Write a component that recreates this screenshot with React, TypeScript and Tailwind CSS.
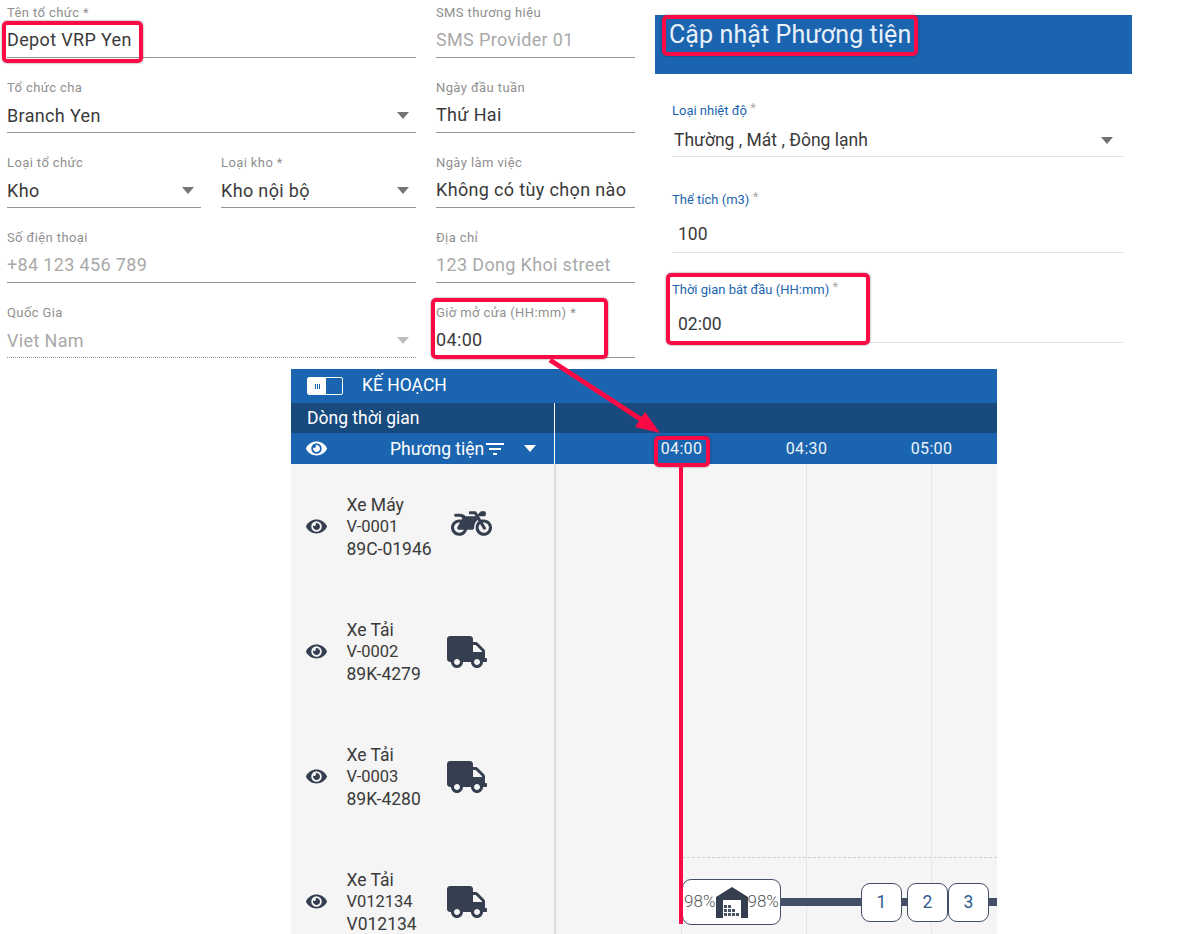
import React from 'react';
import { FaEye, FaMotorcycle, FaTruck } from 'react-icons/fa';
import { MdFilterList } from 'react-icons/md';

const Caret = ({ className = 'border-t-[#757575]' }: { className?: string }) => (
  <span className={`w-0 h-0 border-x-[6.5px] border-x-transparent border-t-[7px] ${className}`} />
);

type FieldProps = {
  label: string;
  value: string;
  muted?: boolean;
  select?: boolean;
  dotted?: boolean;
  className?: string;
};

function Field({ label, value, muted, select, dotted, className = '' }: FieldProps) {
  return (
    <div className={`h-[53px] mb-[22px] flex flex-col border-b border-[#949494] ${dotted ? 'border-dotted' : ''} ${className}`}>
      <label className="h-[15px] text-[13px] tracking-[0.4px] leading-[15px] text-[#8f8f8f] whitespace-nowrap">{label}</label>
      <div className={`flex-1 flex items-center justify-between pr-[7px] ${select ? 'pt-[3px]' : 'pt-[2px]'}`}>
        <span className={`text-[18px] tracking-[0.35px] whitespace-nowrap ${muted ? 'text-[#a9a9a9]' : 'text-[#3a3a3a]'}`}>{value}</span>
        {select && <Caret className={muted ? 'border-t-[#bdbdbd]' : 'border-t-[#757575]'} />}
      </div>
    </div>
  );
}

type BlueFieldProps = {
  label: string;
  value: string;
  indent: string;
  select?: boolean;
  className?: string;
};

function BlueField({ label, value, indent, select, className = '' }: BlueFieldProps) {
  return (
    <div className={`flex flex-col border-b border-[#e2e2e2] ${className}`}>
      <label className="text-[13px] leading-[15px] text-[#1b65b0] whitespace-nowrap">
        {label} <span className="text-[#aaa] align-[3px]">*</span>
      </label>
      <div className={`flex-1 flex items-center justify-between pr-[10px] ${indent}`}>
        <span className="text-[17.5px] text-[#3a3a3a] whitespace-nowrap">{value}</span>
        {select && <Caret className="border-t-[#6f6f6f]" />}
      </div>
    </div>
  );
}

const WarehouseIcon = () => (
  <svg width="32" height="31" viewBox="0 0 32 31" className="shrink-0">
    <path d="M0 31V10L16 0l16 10v21h-7V13H7v18z" fill="#353f50" />
    <g fill="#4b5565">
      <rect x="8" y="18" width="3" height="3" />
      <rect x="12" y="18" width="3" height="3" />
      <rect x="8" y="22" width="3" height="3" />
      <rect x="12" y="22" width="3" height="3" />
      <rect x="16" y="22" width="3" height="3" />
      <rect x="8" y="26" width="3" height="3" />
      <rect x="12" y="26" width="3" height="3" />
      <rect x="16" y="26" width="3" height="3" />
      <rect x="20" y="26" width="3" height="3" />
    </g>
  </svg>
);

const vehicles = [
  { name: 'Xe Máy', code: 'V-0001', plate: '89C-01946', bike: true },
  { name: 'Xe Tải', code: 'V-0002', plate: '89K-4279' },
  { name: 'Xe Tải', code: 'V-0003', plate: '89K-4280' },
  { name: 'Xe Tải', code: 'V012134', plate: 'V012134' },
];

const redBox = 'absolute border-[4px] border-[#fb0a45] rounded-[5px] shadow-[0_0_2px_rgba(0,0,0,0.6)] pointer-events-none';

export default function App() {
  return (
    <div className="relative w-[1183px] h-[934px] overflow-hidden bg-white font-['Roboto',sans-serif]">
      {/* Forms */}
      <div className="flex h-[369px]">
        <div className="w-[655px] pl-[7px] pt-[5px] flex gap-[20px] shrink-0">
          <div className="w-[409px]">
            <Field label="Tên tổ chức *" value="Depot VRP Yen" />
            <Field label="Tổ chức cha" value="Branch Yen" select />
            <div className="flex gap-[20px]">
              <Field label="Loại tổ chức" value="Kho" select className="w-[194px]" />
              <Field label="Loại kho *" value="Kho nội bộ" select className="w-[195px]" />
            </div>
            <Field label="Số điện thoại" value="+84 123 456 789" muted />
            <Field label="Quốc Gia" value="Viet Nam" muted select dotted />
          </div>
          <div className="w-[199px]">
            <Field label="SMS thương hiệu" value="SMS Provider 01" muted />
            <Field label="Ngày đầu tuần" value="Thứ Hai" />
            <Field label="Ngày làm việc" value="Không có tùy chọn nào" />
            <Field label="Địa chỉ" value="123 Dong Khoi street" muted />
            <Field label="Giờ mở cửa (HH:mm) *" value="04:00" />
          </div>
        </div>

        <div className="w-[477px] pt-[15px]">
          <div className="h-[59px] bg-[#1b65b0] pl-[14px] pt-[3px]">
            <h2 className="text-[25px] tracking-[0.1px] leading-[34px] text-[#e8f0f8] whitespace-nowrap">Cập nhật Phương tiện</h2>
          </div>
          <div className="pl-[17px] pr-[9px] pt-[26px]">
            <BlueField label="Loại nhiệt độ" value="Thường , Mát , Đông lạnh" indent="pl-[2px] pt-[6px]" select className="h-[57px] mb-[32px]" />
            <BlueField label="Thể tích (m3)" value="100" indent="pl-[6px] pt-[10px]" className="h-[64px] mb-[26px]" />
            <BlueField label="Thời gian bắt đầu (HH:mm)" value="02:00" indent="pl-[6px] pt-[10px]" className="h-[64px]" />
          </div>
        </div>
      </div>

      {/* Planner */}
      <div className="ml-[291px] w-[706px] h-[565px] flex flex-col overflow-hidden">
        <div className="h-[34px] bg-[#1b65b0] flex items-center pl-[16px] shrink-0">
          <div className="w-[36px] h-[18px] flex rounded-[2px] border border-white overflow-hidden">
            <div className="w-[18px] bg-white flex items-center justify-center gap-[1px]">
              <span className="w-[1px] h-[5px] bg-[#1b65b0]" />
              <span className="w-[1px] h-[5px] bg-[#1b65b0]" />
              <span className="w-[1px] h-[5px] bg-[#1b65b0]" />
            </div>
          </div>
          <span className="ml-[19px] -mt-[2px] text-[17.5px] text-white">KẾ HOẠCH</span>
        </div>

        <div className="h-[30px] bg-[#184a7d] flex shrink-0">
          <div className="w-[264px] pl-[16px] text-[17.5px] leading-[30px] text-white border-r border-white">Dòng thời gian</div>
        </div>

        <div className="h-[31px] bg-[#1b65b0] flex shrink-0 text-white">
          <div className="w-[264px] flex items-center pl-[15px] border-r border-white">
            <FaEye className="w-[21px] h-[21px]" />
            <span className="ml-[63px] pt-[1px] text-[17.5px] whitespace-nowrap">Phương tiện</span>
            <MdFilterList className="w-[24px] h-[24px] -ml-[1px] shrink-0" />
            <Caret className="ml-[17px] border-t-white" />
          </div>
          <div className="flex pl-[64px] text-[16px] tracking-[0.3px] leading-[32px] text-[#eef4fa]">
            {['04:00', '04:30', '05:00'].map(t => (
              <span key={t} className="w-[125px] text-center">{t}</span>
            ))}
          </div>
        </div>

        <div className="flex-1 flex min-h-0 bg-[#f5f5f5]">
          <div className="w-[263px] shrink-0">
            {vehicles.map(v => (
              <div key={v.code} className="h-[125px] flex items-center pl-[15px] text-[#3a3a3a]">
                <FaEye className="w-[21px] h-[21px] text-[#353f50] shrink-0" />
                <div className="ml-[20px] -translate-x-[0.5px] w-[100px] shrink-0">
                  <div className="text-[17.5px] leading-[22px]">{v.name}</div>
                  <div className="text-[16.5px] leading-[22px]">{v.code}</div>
                  <div className="text-[17.5px] leading-[22px] whitespace-nowrap">{v.plate}</div>
                </div>
                {v.bike ? (
                  <FaMotorcycle className="ml-[4px] -mt-[6px] w-[41px] h-[33px] text-[#353f50]" />
                ) : (
                  <FaTruck className="w-[40px] h-[32px] text-[#353f50]" />
                )}
              </div>
            ))}
          </div>

          <div className="relative flex-1 border-l-2 border-[#dcdcdc]">
            <div className="flex h-full">
              <div className="w-[126px] h-full border-r border-[#e6e6e6]" />
              <div className="w-[125px] h-full border-r border-[#e6e6e6]" />
              <div className="w-[125px] h-full border-r border-[#e6e6e6]" />
            </div>
            <div className="absolute left-[126px] right-0 top-[393px] border-t border-dashed border-[#cfcfcf]" />
            {/* Trip on the time axis */}
            <div className="absolute left-[126px] right-0 top-[415px] flex items-center">
              <div className="w-[99px] h-[46px] shrink-0 flex items-center justify-center bg-white border border-[#434f66] rounded-[9px] text-[17px] font-light text-[#555]">
                <span>98%</span>
                <WarehouseIcon />
                <span>98%</span>
              </div>
              <div className="w-[80px] h-[8px] bg-[#434f66] shrink-0" />
              <div className="w-[41px] h-[39px] shrink-0 flex items-center justify-center bg-white border border-[#434f66] rounded-[9px] text-[17.5px] text-[#2f5c8f]">1</div>
              <div className="w-[5px] h-[8px] bg-[#434f66] shrink-0" />
              <div className="w-[41px] h-[39px] shrink-0 flex items-center justify-center bg-white border border-[#434f66] rounded-[9px] text-[17.5px] text-[#2f5c8f]">2</div>
              <div className="w-[41px] h-[39px] shrink-0 flex items-center justify-center bg-white border border-[#434f66] rounded-[9px] text-[17.5px] text-[#2f5c8f]">3</div>
              <div className="flex-1 h-[8px] bg-[#434f66]" />
            </div>
          </div>
        </div>
      </div>

      {/* Annotations */}
      <div className={`${redBox} left-[2px] top-[21px] w-[141px] h-[42px]`} />
      <div className={`${redBox} left-[431px] top-[298px] w-[177px] h-[61px]`} />
      <div className={`${redBox} left-[662px] top-[15px] w-[256px] h-[41px]`} />
      <div className={`${redBox} left-[666px] top-[273px] w-[204px] h-[72px]`} />
      <div className={`${redBox} left-[654px] top-[436px] w-[56px] h-[31px]`} />
      <div className="absolute left-[679px] top-[466px] w-[4px] h-[458px] bg-[#fb0a45]" />
      <svg className="absolute left-[540px] top-[350px] pointer-events-none" width="130" height="90" viewBox="0 0 130 90">
        <line x1="10" y1="10" x2="108" y2="74" stroke="#fb0a45" strokeWidth="5" />
        <polygon points="120,83 105,62 95,77" fill="#fb0a45" />
      </svg>
    </div>
  );
}
